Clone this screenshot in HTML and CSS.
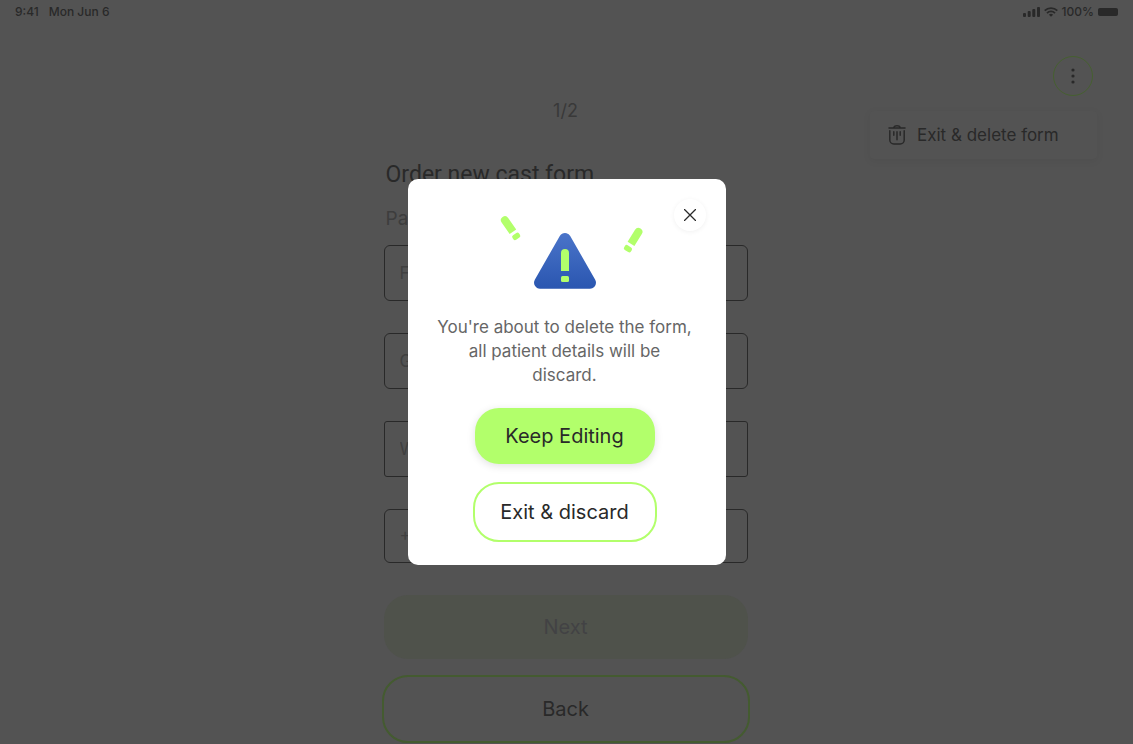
FILE: index.html
```html
<!DOCTYPE html>
<html lang="en">
<head>
<meta charset="utf-8">
<meta name="viewport" content="width=device-width, initial-scale=1">
<title>Order new cast form</title>
<link rel="stylesheet" href="styles.css">
</head>
<body>
<div class="page">
  <header class="status">
    <div class="status-group status-left"><span>9:41</span><span>Mon Jun 6</span></div>
    <div class="status-group">
      <svg width="17" height="10" viewBox="0 0 17 10" fill="currentColor" aria-hidden="true">
        <rect x="0" y="6" width="3" height="4" rx="1"/><rect x="4.7" y="4" width="3" height="6" rx="1"/><rect x="9.3" y="2" width="3" height="8" rx="1"/><rect x="14" y="0" width="3" height="10" rx="1"/>
      </svg>
      <svg width="14" height="10" viewBox="0 0 14 10" fill="none" stroke="currentColor" stroke-width="1.8" aria-hidden="true">
        <path d="M.7 3.6a9 9 0 0 1 12.6 0M3 6.1a5.7 5.7 0 0 1 8 0"/><path d="M7 9.8 4.9 7.7a3 3 0 0 1 4.2 0z" fill="currentColor" stroke="none"/>
      </svg>
      <span>100%</span>
      <span class="battery"></span>
    </div>
  </header>

  <div class="toolbar">
    <div class="menu-anchor">
      <button class="more" type="button" aria-label="More options" aria-expanded="true">
        <svg width="4" height="16" viewBox="0 0 4 16" fill="currentColor" aria-hidden="true"><circle cx="2" cy="2" r="1.6"/><circle cx="2" cy="8" r="1.6"/><circle cx="2" cy="14" r="1.6"/></svg>
      </button>
      <div class="menu">
        <button class="menu-item" type="button">
          <svg width="18" height="20" viewBox="0 0 18 20" fill="none" stroke="currentColor" stroke-width="1.5" stroke-linecap="round" aria-hidden="true">
            <path d="M1 2.9h16M5.8 2.3C6.3 1.1 7.1.8 9 .8s2.7.3 3.2 1.5M1.8 5.800v9.200a4 4 0 0 0 4 4h6.400a4 4 0 0 0 4-4V5.800M5.800 6.800v3.400M9 6.800v8M12.200 6.800v3.400"/>
          </svg>
          <span>Exit &amp; delete form</span>
        </button>
      </div>
    </div>
  </div>

  <main class="form-column">
    <p class="step">1/2</p>
    <h1 class="title">Order new cast form</h1>
    <p class="subtitle">Patient details</p>
    <form class="form">
      <input class="field" type="text" placeholder="Full name" aria-label="Full name">
      <input class="field" type="text" placeholder="Gender" aria-label="Gender">
      <input class="field field-tight" type="text" placeholder="Weight" aria-label="Weight">
      <input class="field field-short" type="tel" placeholder="+ Phone" aria-label="Phone">
      <button class="next" type="button" disabled>Next</button>
      <button class="back" type="button">Back</button>
    </form>
  </main>
</div>

<div class="overlay">
  <section class="dialog" role="dialog" aria-modal="true" aria-describedby="dialog-text">
    <button class="close" type="button" aria-label="Close">
      <svg width="12" height="12" viewBox="0 0 12 12" fill="none" stroke="currentColor" stroke-width="1.3" stroke-linecap="round" aria-hidden="true"><path d="M.5.5l11 11M11.5.5l-11 11"/></svg>
    </button>
    <svg class="warning" width="160" height="80" viewBox="-5 0 160 80" aria-hidden="true">
      <defs>
        <linearGradient id="blue" gradientUnits="userSpaceOnUse" x1="75" y1="21" x2="75" y2="77"><stop offset="0" stop-color="#4a74c9"/><stop offset="1" stop-color="#2a56b0"/></linearGradient>
        <g id="mark"><path d="M-4 10V-4a4 4 0 0 1 8 0V10z"/><rect x="-4" y="13" width="8" height="5.500" rx="2"/></g>
      </defs>
      <path d="M75 27 50 70.700h50z" fill="url(#blue)" stroke="url(#blue)" stroke-width="12" stroke-linejoin="round"/>
      <g fill="#b2ff6b">
        <path d="M71 59V41a4 4 0 0 1 8 0v18z"/><rect x="71" y="64" width="8" height="6" rx="1.500"/>
        <use href="#mark" transform="translate(17.200 11.500) rotate(-35)"/>
        <use href="#mark" transform="translate(146.300 23.300) rotate(32)"/>
      </g>
    </svg>
    <p class="message" id="dialog-text">You're about to delete the form,<br>all patient details will be<br>discard.</p>
    <button class="keep" type="button">Keep Editing</button>
    <button class="discard" type="button">Exit &amp; discard</button>
  </section>
</div>
</body>
</html>
```
FILE: styles.css
```css
* { box-sizing: border-box; }

body {
  margin: 0;
  background: #535353;
  color: #292929;
  font-family: Inter, "Liberation Sans", sans-serif;
}

p, h1 { margin: 0; }

button, input {
  font: inherit;
  color: inherit;
  margin: 0;
}

svg { display: block; flex: none; }

.page {
  height: 100vh;
  overflow: hidden;
}

.status {
  display: flex;
  justify-content: space-between;
  height: 24px;
  padding: 0 15px;
  font-size: 12px;
  font-weight: 500;
  line-height: 24px;
}

.status-group {
  display: flex;
  align-items: center;
  gap: 4px;
}

.status-left { gap: 10px; }

.battery {
  width: 20px;
  height: 8px;
  border-radius: 2px;
  background: #292929;
}

.toolbar {
  display: flex;
  justify-content: flex-end;
  padding: 32px 40px 0;
}

.menu-anchor { position: relative; }

.more {
  display: grid;
  place-items: center;
  width: 40px;
  height: 40px;
  padding: 0;
  border: 1px solid #466030;
  border-radius: 50%;
  background: none;
}

.menu {
  position: absolute;
  top: 55px;
  right: -4px;
  width: 227px;
  border-radius: 4px;
  background: #535353;
  box-shadow: 0 2px 8px rgba(0, 0, 0, 0.06);
}

.menu-item {
  display: flex;
  align-items: center;
  gap: 11px;
  width: 100%;
  height: 48px;
  padding: 0 18px;
  border: 0;
  background: none;
  font-size: 17px;
  white-space: nowrap;
}

.form-column {
  width: 366px;
  max-width: 100%;
  margin: 0 auto;
  padding-right: 2px;
}

.step {
  font-size: 18px;
  line-height: 30px;
  text-align: center;
  color: #393939;
}

.title {
  margin-top: 34px;
  padding-left: 2px;
  font-family: Roboto, Inter, sans-serif;
  font-size: 23px;
  font-weight: 400;
  line-height: 30px;
}

.subtitle {
  margin-top: 17px;
  padding-left: 2px;
  font-size: 19px;
  line-height: 24px;
  color: #3d3d3d;
}

.form {
  display: flex;
  flex-direction: column;
  margin-top: 14px;
}

.field {
  height: 56px;
  margin-bottom: 32px;
  padding: 0 15px;
  border: 1px solid #292929;
  border-radius: 6px;
  background: none;
  font-size: 17px;
}

.field-tight { border-radius: 3px; }

.field-short { height: 54px; }

.field::placeholder {
  color: #404040;
  opacity: 1;
}

.next {
  height: 64px;
  border: 0;
  border-radius: 24px;
  background: #4f524b;
  color: #424244;
  font-size: 20px;
}

.back {
  height: 68px;
  margin: 16px -2px 0;
  border: 2px solid #445b30;
  border-radius: 26px;
  background: none;
  font-size: 20px;
}

.overlay {
  position: fixed;
  inset: 0;
  display: grid;
  place-items: center;
}

.dialog {
  position: relative;
  display: flex;
  flex-direction: column;
  align-items: center;
  width: 318px;
  max-width: 100%;
  padding: 33px 28px 23px 24px;
  border-radius: 10px;
  background: #ffffff;
}

.close {
  position: absolute;
  top: 20px;
  right: 20px;
  display: grid;
  place-items: center;
  width: 32px;
  height: 32px;
  padding: 0;
  border: 0;
  border-radius: 50%;
  background: #ffffff;
  box-shadow: 0 1px 5px rgba(0, 0, 0, 0.06);
}

.message {
  margin-top: 23px;
  font-size: 17px;
  line-height: 24px;
  text-align: center;
  white-space: nowrap;
  color: #666666;
}

.keep {
  width: 180px;
  height: 56px;
  margin-top: 21px;
  border: 0;
  border-radius: 24px;
  background: #b2ff6b;
  box-shadow: 0 2px 8px rgba(0, 0, 0, 0.12);
  font-size: 20px;
}

.discard {
  width: 184px;
  height: 60px;
  margin-top: 18px;
  border: 2px solid #b2ff6b;
  border-radius: 26px;
  background: none;
  font-size: 20px;
}
```
